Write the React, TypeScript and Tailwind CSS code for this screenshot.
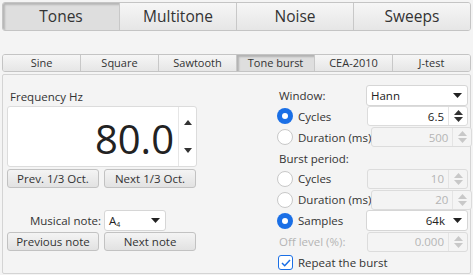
const topTabs = ['Tones', 'Multitone', 'Noise', 'Sweeps'];
const subTabs = ['Sine', 'Square', 'Sawtooth', 'Tone burst', 'CEA-2010', 'J-test'];

function Caret({ className = '' }: { className?: string }) {
  return (
    <svg width="9" height="5" viewBox="0 0 9 5" className={className}>
      <path d="M0 0h9L4.5 5z" fill="currentColor" />
    </svg>
  );
}

function SpinArrows({ disabled }: { disabled?: boolean }) {
  return (
    <div
      className={`flex w-[18px] flex-col items-center justify-center gap-[2px] ${
        disabled ? 'text-[#c8c8c8]' : 'text-[#333]'
      }`}
    >
      <svg width="9" height="5" viewBox="0 0 9 5">
        <path d="M4.5 0L9 5H0z" fill="currentColor" />
      </svg>
      <svg width="9" height="5" viewBox="0 0 9 5">
        <path d="M0 0h9L4.5 5z" fill="currentColor" />
      </svg>
    </div>
  );
}

function Btn({ label }: { label: string }) {
  return (
    <button className="h-[19px] w-[92px] rounded-[3px] border border-[#c2c2c2] bg-gradient-to-b from-[#f4f4f4] to-[#e2e2e2] text-[11.5px] leading-none whitespace-nowrap text-[#333]">
      {label}
    </button>
  );
}

function Radio({ on, label }: { on?: boolean; label: string }) {
  return (
    <div className="flex items-center gap-[5px] whitespace-nowrap">
      {on ? (
        <span className="flex h-[16px] w-[16px] items-center justify-center rounded-full bg-[#1a6fe6]">
          <span className="h-[6px] w-[6px] rounded-full bg-white" />
        </span>
      ) : (
        <span className="h-[16px] w-[16px] rounded-full border border-[#c8c8c8] bg-white" />
      )}
      <span className="text-[11.5px] text-[#333]">{label}</span>
    </div>
  );
}

function NumField({ value, disabled }: { value: string; disabled?: boolean }) {
  return (
    <div
      className={`flex h-[20px] w-[101px] shrink-0 items-center rounded-[3px] border border-[#dcdcdc] ${
        disabled ? 'bg-[#f4f4f4]' : 'bg-white'
      }`}
    >
      <span
        className={`flex-1 pr-[4px] text-right text-[11.5px] ${
          disabled ? 'text-[#b4b4b4]' : 'text-[#222]'
        }`}
      >
        {value}
      </span>
      <div className="h-full border-l border-[#e4e4e4]" />
      <SpinArrows disabled={disabled} />
    </div>
  );
}

function Select({ value, width, right }: { value: React.ReactNode; width: string; right?: boolean }) {
  return (
    <div
      className={`flex h-[21px] ${width} shrink-0 items-center rounded-[3px] border border-[#d6d6d6] bg-white pl-[4px] pr-[5px]`}
    >
      <span className={`flex-1 text-[11.5px] text-[#222] ${right ? 'pr-[8px] text-right' : ''}`}>{value}</span>
      <Caret className="text-[#222]" />
    </div>
  );
}

export default function App() {
  return (
    <div
      className="h-[275px] w-[473px] overflow-hidden bg-[#f4f4f4] px-[2px] pt-[2px]"
      style={{ fontFamily: '"Open Sans", "Noto Sans", sans-serif' }}
    >
      <div className="flex h-[29px] overflow-hidden rounded-[3px] border border-[#c4c4c4]">
        {topTabs.map((t, i) => (
          <div
            key={t}
            className={`flex flex-1 items-center justify-center text-[15.5px] text-[#333] ${
              i > 0 ? 'border-l border-[#c8c8c8]' : ''
            } ${
              i === 0
                ? 'bg-[#dedede] shadow-[inset_2px_2px_2px_rgba(0,0,0,0.18)]'
                : 'bg-gradient-to-b from-[#f6f6f6] to-[#e6e6e6]'
            }`}
          >
            {t}
          </div>
        ))}
      </div>

      <div className="mt-[23px] flex h-[18px] overflow-hidden rounded-[3px] border border-[#c4c4c4]">
        {subTabs.map((t, i) => (
          <div
            key={t}
            className={`flex flex-1 items-center justify-center text-[11px] text-[#333] ${
              i > 0 ? 'border-l border-[#c8c8c8]' : ''
            } ${
              i === 3
                ? 'bg-[#dedede] shadow-[inset_2px_2px_2px_rgba(0,0,0,0.2)]'
                : 'bg-gradient-to-b from-[#f6f6f6] to-[#e6e6e6]'
            }`}
          >
            {t}
          </div>
        ))}
      </div>

      <div className="mt-[2px] flex h-[200px] rounded-[2px] border border-[#d4d4d4] bg-[#f4f4f4]">
        <div className="flex w-[200px] shrink-0 flex-col pl-[4px] pt-[14px]">
          <div className="pl-[3px] text-[11.5px] leading-[16px] text-[#333]">Frequency Hz</div>
          <div className="mt-[1px] flex h-[61px] w-[190px] rounded-[3px] border border-[#dcdcdc] bg-white">
            <span className="flex flex-1 items-center justify-end pr-[4px] pt-[4px] text-[40px] leading-none text-[#222]">
              80.0
            </span>
            <div className="h-full border-l border-[#e6e6e6]" />
            <div className="flex w-[17px] flex-col items-center justify-between py-[13px] text-[#333]">
              <svg width="8" height="5" viewBox="0 0 8 5">
                <path d="M4 0L8 5H0z" fill="currentColor" />
              </svg>
              <svg width="8" height="5" viewBox="0 0 8 5">
                <path d="M0 0h8L4 5z" fill="currentColor" />
              </svg>
            </div>
          </div>
          <div className="mt-[2px] flex gap-[5px]">
            <Btn label="Prev. 1/3 Oct." />
            <Btn label="Next 1/3 Oct." />
          </div>
          <div className="mt-[22px] flex items-center gap-[3px]">
            <span className="w-[94px] text-right text-[11.5px] text-[#333]">Musical note:</span>
            <Select
              width="w-[62px]"
              value={
                <span>
                  A<sub className="text-[7px]">4</sub>
                </span>
              }
            />
          </div>
          <div className="mt-[1px] flex gap-[5px]">
            <Btn label="Previous note" />
            <Btn label="Next note" />
          </div>
        </div>

        <div className="ml-[74px] flex w-[191px] shrink-0 flex-col pt-[10px]">
          <div className="flex h-[21px] items-center justify-between">
            <span className="pl-[2px] text-[11.5px] text-[#333]">Window:</span>
            <Select width="w-[102px]" value="Hann" />
          </div>
          <div className="flex h-[21px] items-center justify-between">
            <Radio on label="Cycles" />
            <NumField value="6.5" />
          </div>
          <div className="flex h-[21px] items-center justify-between">
            <Radio label="Duration (ms)" />
            <NumField value="500" disabled />
          </div>
          <div className="flex h-[21px] items-center pl-[2px] text-[11.5px] text-[#333]">Burst period:</div>
          <div className="flex h-[21px] items-center justify-between">
            <Radio label="Cycles" />
            <NumField value="10" disabled />
          </div>
          <div className="flex h-[21px] items-center justify-between">
            <Radio label="Duration (ms)" />
            <NumField value="20" disabled />
          </div>
          <div className="flex h-[21px] items-center justify-between">
            <Radio on label="Samples" />
            <Select width="w-[102px]" value="64k" right />
          </div>
          <div className="flex h-[21px] items-center justify-between">
            <span className="pl-[2px] text-[11.5px] text-[#b4b4b4]">Off level (%):</span>
            <NumField value="0.000" disabled />
          </div>
          <div className="flex h-[21px] items-center gap-[5px] pl-[1px]">
            <span className="flex h-[15px] w-[15px] items-center justify-center rounded-[3px] border border-[#1a6fe6] bg-white">
              <svg width="10" height="8" viewBox="0 0 10 8">
                <path d="M1 4l2.7 2.7L9 1" stroke="#1a6fe6" strokeWidth="1.5" fill="none" />
              </svg>
            </span>
            <span className="text-[11.5px] text-[#333]">Repeat the burst</span>
          </div>
        </div>
      </div>
    </div>
  );
}
